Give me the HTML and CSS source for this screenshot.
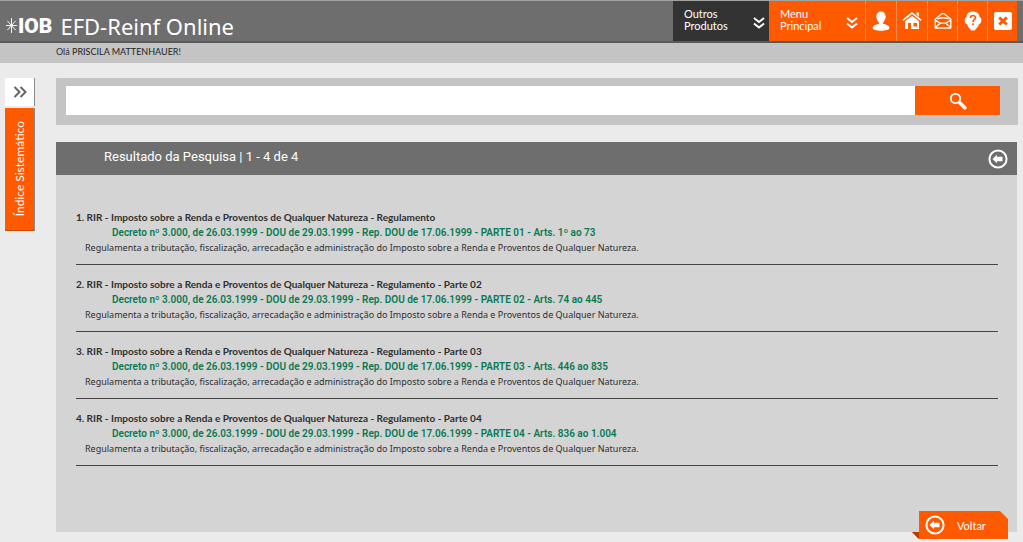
FILE: index.html
```html
<!DOCTYPE html>
<html lang="pt-BR">
<head>
<meta charset="utf-8">
<title>EFD-Reinf Online</title>
<link rel="stylesheet" href="styles.css">
</head>
<body>
<header class="topbar">
  <div class="brand">
    <svg class="brand-star" viewBox="0 0 14 18" aria-hidden="true"><path d="M7 1v16M1 9h12M2.500 4l9 10M11.500 4l-9 10"/></svg>
    <span class="brand-name">IOB</span>
    <h1 class="product">EFD-Reinf Online</h1>
  </div>
  <nav class="menu">
    <button class="menu-item menu-dark" type="button"><span>Outros<br>Produtos</span>
      <svg class="chevrons" viewBox="0 0 12 14" aria-hidden="true"><path d="M1 2l5 4 5-4M1 7.500l5 4 5-4"/></svg></button>
    <button class="menu-item" type="button"><span>Menu<br>Principal</span>
      <svg class="chevrons" viewBox="0 0 12 14" aria-hidden="true"><path d="M1 2l5 4 5-4M1 7.500l5 4 5-4"/></svg></button>
    <button class="tool" type="button" aria-label="Usuário"><svg viewBox="0 0 20 20"><path fill="#fff" d="M10 .5c3 0 4.700 2 4.500 5 .5.600.3 1.700-.4 2.200-.4 1.800-1.100 2.900-2 3.800v1.300c2 .8 6.300 1.200 6.300 4.200 0 1.900-3.800 2.700-8.400 2.700S1.600 18.900 1.600 17c0-3 4.300-3.400 6.300-4.200v-1.300c-.9-.9-1.600-2-2-3.800-.7-.5-.9-1.600-.4-2.200C5.300 2.500 7 .5 10 .5z"/></svg></button>
    <button class="tool" type="button" aria-label="Início"><svg viewBox="0 0 20 20"><path fill="none" stroke="#fff" stroke-width="1.600" d="M.8 9.300L10 2l9.200 7.300"/><path fill="#fff" fill-rule="evenodd" d="M14.500 1.500H17v4.200l-2.500-2zM10 4.700l7 5.500V18H9v-6H6v6H3v-7.800zM11.500 12v3.500H15V12z"/></svg></button>
    <button class="tool" type="button" aria-label="Mensagens"><svg viewBox="0 0 20 20"><path fill="none" stroke="#fff" stroke-width="1.300" stroke-linejoin="round" d="M2.200 8.200L8.500 3q1.500-1 3 0l6.300 5.200V17H2.200zM2.200 9l5 3.200h5.600l5-3.200M2.200 16.500l5-4.300M17.800 16.500l-5-4.300M4.500 8q5.500-2.500 11 0"/></svg></button>
    <button class="tool" type="button" aria-label="Ajuda"><svg viewBox="0 0 20 20"><path fill="#fff" d="M10 .5c4.200 0 6.300 2.300 6.500 5.500 1.600.5 2 2 1.800 3.800-.2 1.900-.8 3.200-2.300 3.400-.9 2.800-2.900 4.300-4.300 6.300H8.300C6.900 17.500 4.900 16 4 13.200c-1.500-.2-2.100-1.500-2.300-3.400C1.500 8 1.900 6.500 3.500 6 3.700 2.800 5.800.5 10 .5z"/><path fill="none" stroke="#ff5a00" stroke-width="1.700" d="M7.500 7c0-3.300 5-3.200 5-.3 0 2-2.500 1.900-2.500 4.300M10 12.300v1.900"/></svg></button>
    <button class="tool" type="button" aria-label="Fechar"><svg viewBox="0 0 20 20"><rect x="1" y="1" width="18" height="18" rx="2" fill="#fff"/><path stroke="#ff5a00" stroke-width="3" d="M6.200 6.500l7.600 7M13.800 6.500l-7.600 7"/></svg></button>
  </nav>
</header>
<div class="greeting">Olá <span class="user">PRISCILA MATTENHAUER</span>!</div>
<div class="page">
  <aside class="side">
    <button class="side-toggle" type="button" aria-label="Expandir"><svg viewBox="0 0 14 12"><path d="M1.500 1l5 5-5 5M7.500 1l5 5-5 5"/></svg></button>
    <button class="side-tab" type="button"><span>Índice Sistemático</span></button>
  </aside>
  <main class="main">
    <form class="search">
      <input class="search-input" type="text" aria-label="Pesquisar">
      <button class="search-button" type="button" aria-label="Buscar"><svg viewBox="0 0 18 18"><circle cx="6.500" cy="6.500" r="4.700" fill="none" stroke="#fff" stroke-width="1.800"/><path d="M10 10l1.500 1.500" stroke="#fff" stroke-width="2"/><path d="M11.500 11.500l4.300 4.300" stroke="#fff" stroke-width="3.600" stroke-linecap="round"/></svg></button>
    </form>
    <section class="results">
      <div class="results-head">
        <h2>Resultado da Pesquisa | 1 - 4 de 4</h2>
        <button class="back-icon" type="button" aria-label="Voltar"><svg viewBox="0 0 20 20"><circle cx="10" cy="10" r="8.600"/><path d="M4.500 10l4.500-4.200v2h5.500v4.400H9v2z"/></svg></button>
      </div>
      <ul class="list">
        <li class="item">
          <h3>1. RIR - Imposto sobre a Renda e Proventos de Qualquer Natureza - Regulamento</h3>
          <a class="link" href="#">Decreto nº 3.000, de 26.03.1999 - DOU de 29.03.1999 - Rep. DOU de 17.06.1999 - PARTE 01 - Arts. 1º ao 73</a>
          <p>Regulamenta a tributação, fiscalização, arrecadação e administração do Imposto sobre a Renda e Proventos de Qualquer Natureza.</p>
        </li>
        <li class="item">
          <h3>2. RIR - Imposto sobre a Renda e Proventos de Qualquer Natureza - Regulamento - Parte 02</h3>
          <a class="link" href="#">Decreto nº 3.000, de 26.03.1999 - DOU de 29.03.1999 - Rep. DOU de 17.06.1999 - PARTE 02 - Arts. 74 ao 445</a>
          <p>Regulamenta a tributação, fiscalização, arrecadação e administração do Imposto sobre a Renda e Proventos de Qualquer Natureza.</p>
        </li>
        <li class="item">
          <h3>3. RIR - Imposto sobre a Renda e Proventos de Qualquer Natureza - Regulamento - Parte 03</h3>
          <a class="link" href="#">Decreto nº 3.000, de 26.03.1999 - DOU de 29.03.1999 - Rep. DOU de 17.06.1999 - PARTE 03 - Arts. 446 ao 835</a>
          <p>Regulamenta a tributação, fiscalização, arrecadação e administração do Imposto sobre a Renda e Proventos de Qualquer Natureza.</p>
        </li>
        <li class="item">
          <h3>4. RIR - Imposto sobre a Renda e Proventos de Qualquer Natureza - Regulamento - Parte 04</h3>
          <a class="link" href="#">Decreto nº 3.000, de 26.03.1999 - DOU de 29.03.1999 - Rep. DOU de 17.06.1999 - PARTE 04 - Arts. 836 ao 1.004</a>
          <p>Regulamenta a tributação, fiscalização, arrecadação e administração do Imposto sobre a Renda e Proventos de Qualquer Natureza.</p>
        </li>
      </ul>
      <button class="back" type="button"><svg viewBox="0 0 20 20" aria-hidden="true"><circle cx="10" cy="10" r="8.600"/><path d="M4.500 10l4.500-4.200v2h5.500v4.400H9v2z"/></svg><span>Voltar</span></button>
    </section>
  </main>
</div>
</body>
</html>
```
FILE: styles.css
```css
* { box-sizing: border-box; }
body {
  margin: 0;
  min-height: 100vh;
  display: flex;
  flex-direction: column;
  background: #ebebeb;
  color: #2e2e2e;
  font: 10px/15px Lato, "Open Sans", sans-serif;
}
button { border: 0; padding: 0; margin: 0; font: inherit; color: #fff; cursor: pointer; }
svg { display: block; }
h1, h2, h3, p, ul { margin: 0; padding: 0; font-weight: 400; }

.topbar {
  display: flex;
  justify-content: space-between;
  padding-right: 6px;
  height: 43px;
  background: #6e6e6e;
  border-top: 1px solid #a0a3a0;
  border-bottom: 2px solid #595959;
}
.brand { display: flex; align-items: center; padding: 9px 0 0 5px; color: #fff; }
.brand-star { width: 13px; height: 17px; fill: none; stroke: #fff; stroke-width: 1; }
.brand-name { font: 900 21px/24px Roboto, sans-serif; }
.product { margin-left: 8px; font: 22px/30px "Noto Sans", sans-serif; }
.menu { display: flex; }
.menu-item {
  display: flex;
  justify-content: space-between;
  width: 96px;
  padding: 7px 7px 0 11px;
  background: #ff5a00;
  font-size: 11px;
  line-height: 12px;
  text-align: left;
}
.menu-dark { padding-right: 4px; background: #333; }
.chevrons { width: 12px; height: 14px; margin-top: 8px; fill: none; stroke: #fff; stroke-width: 2; }
.tool {
  display: flex;
  align-items: center;
  justify-content: center;
  width: 30px;
  border-left: 1px solid #ff8a4a;
  background: #ff5a00;
}
.tool:nth-child(4), .tool:nth-child(3) { width: 31px; }
.tool svg { width: 20px; height: 20px; }

.greeting { height: 20px; padding-left: 56px; background: #c4c4c4; font-size: 9px; line-height: 17px; }
.user { color: #222; }

.page { flex: 1; display: flex; gap: 21px; padding: 15px 5px 10px; }
.side { width: 30px; display: flex; flex-direction: column; gap: 2px; }
.side-toggle, .side-tab { display: flex; align-items: center; justify-content: center; border-right: 1px solid #8a8a8a; }
.side-toggle { height: 28px; background: #fff; }
.side-toggle svg { width: 14px; height: 12px; fill: none; stroke: #666; stroke-width: 2; }
.side-tab { height: 123px; background: #ff5a00; border-bottom: 1px solid #c84b0a; font-size: 12px; }
.side-tab span { writing-mode: vertical-rl; transform: rotate(180deg); }

.main { flex: 1; display: flex; flex-direction: column; gap: 17px; }
.search { display: flex; height: 47px; padding: 8px 18px 10px 10px; background: #c4c4c4; border-radius: 1px; }
.search-input { flex: 1; min-width: 0; border: 0; padding: 0 8px; background: #fff; font: inherit; }
.search-button { display: flex; align-items: center; justify-content: center; width: 85px; background: #ff5a00; }
.search-button svg { width: 18px; height: 18px; }

.results { position: relative; flex: 1; margin-right: 1px; background: #d4d4d4; }
.results-head {
  display: flex;
  align-items: center;
  justify-content: space-between;
  height: 33px;
  padding: 0 9px 0 48px;
  background: #6e6e6e;
  color: #fff;
}
.results-head h2 { font: 13px/18px Roboto, sans-serif; margin-bottom: 4px; }
.back-icon { background: none; }
.back-icon svg, .back svg { width: 20px; height: 20px; fill: #fff; }
.back-icon circle, .back circle { fill: none; stroke: #fff; stroke-width: 2; }
.list { list-style: none; padding: 23px 19px 66px 20px; }
.item { padding: 12px 0 9px; border-bottom: 1px solid #444; }
.item h3 { font-size: 10px; line-height: 15px; font-weight: 700; }
.link { display: block; margin-left: 36px; color: #087a52; font-family: Roboto, sans-serif; font-weight: 600; text-decoration: none; }
.item p { margin-left: 9px; font-family: "Noto Sans", sans-serif; font-size: 9px; }

.back {
  position: absolute;
  right: 9px;
  bottom: -7px;
  display: flex;
  align-items: center;
  gap: 12px;
  width: 96px;
  height: 28px;
  padding: 0 0 0 13px;
  background: #ff5a00;
  font-size: 11px;
  clip-path: polygon(7px 0, 88px 0, 100% 8px, 100% 100%, 7px 100%, 0 21px, 7px 21px);
}
.back::before {
  content: "";
  position: absolute;
  left: 0;
  bottom: 0;
  width: 7px;
  height: 7px;
  background: #b33c00;
}
```
